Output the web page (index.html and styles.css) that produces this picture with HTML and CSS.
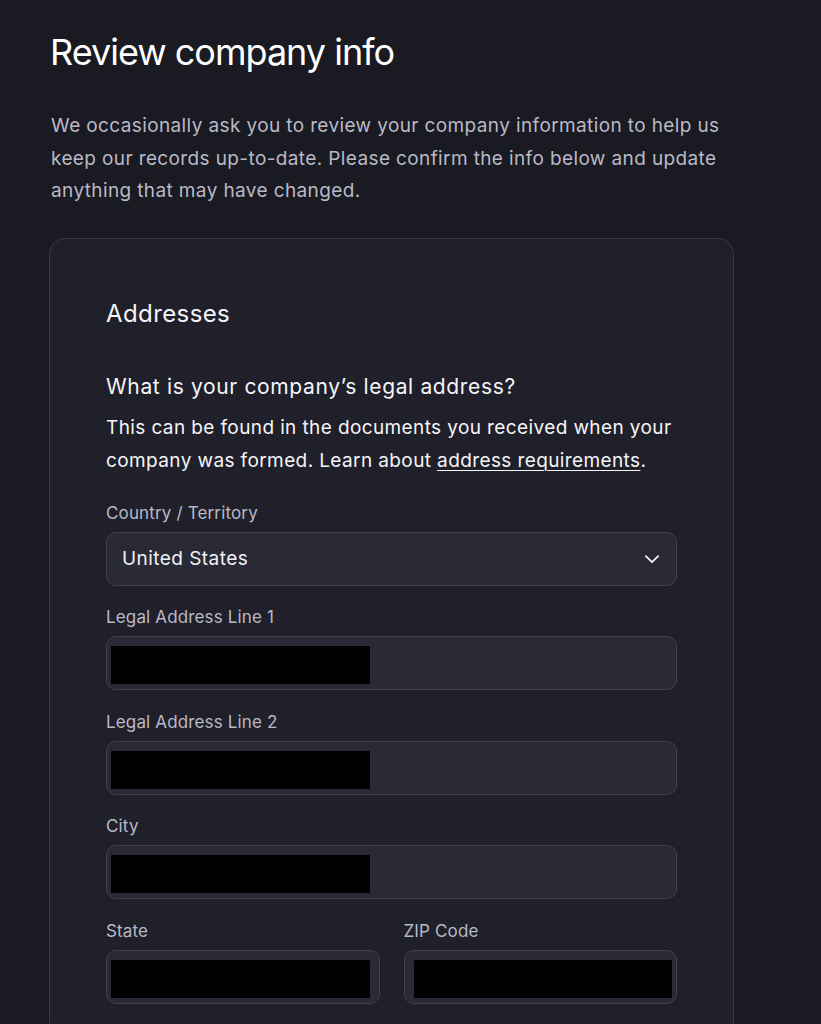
FILE: index.html
```html
<!DOCTYPE html>
<html lang="en">
<head>
<meta charset="utf-8">
<title>Review company info</title>
<link rel="stylesheet" href="styles.css">
</head>
<body>
<main class="page">
  <h1 class="title">Review company info</h1>
  <p class="intro">We occasionally ask you to review your company information to help us keep our records up-to-date. Please confirm the info below and update anything that may have changed.</p>
  <section class="card">
    <h2 class="card-title">Addresses</h2>
    <h3 class="question">What is your company’s legal address?</h3>
    <p class="help">This can be found in the documents you received when your company was formed. Learn about <a href="#" class="link">address requirements</a>.</p>
    <div class="fields">
      <div class="field">
        <label class="label">Country / Territory</label>
        <div class="input select">
          <span class="value">United States</span>
          <svg class="chev" width="16" height="16" viewBox="0 0 16 16" fill="none"><path d="M1.8 5.2 8 11.2l6.2-6" stroke="#f2f2f5" stroke-width="1.8" stroke-linecap="round" stroke-linejoin="round"/></svg>
        </div>
      </div>
      <div class="field">
        <label class="label">Legal Address Line 1</label>
        <div class="input"><span class="redact"></span></div>
      </div>
      <div class="field">
        <label class="label">Legal Address Line 2</label>
        <div class="input"><span class="redact"></span></div>
      </div>
      <div class="field">
        <label class="label">City</label>
        <div class="input"><span class="redact"></span></div>
      </div>
      <div class="row">
        <div class="field">
          <label class="label">State</label>
          <div class="input"><span class="redact state"></span></div>
        </div>
        <div class="field">
          <label class="label">ZIP Code</label>
          <div class="input"><span class="redact zip"></span></div>
        </div>
      </div>
    </div>
  </section>
</main>
</body>
</html>
```

FILE: styles.css
```css
html, body {
  margin: 0;
  padding: 0;
  background: #1a1a23;
}
body {
  font-family: Inter, "Noto Sans", sans-serif;
  color: #f3f3f6;
  -webkit-font-smoothing: antialiased;
}
.page {
  padding: 30px 0 0 50px;
  width: 684px;
}
.title {
  margin: 0;
  font-size: 36px;
  font-weight: 400;
  line-height: 44px;
  letter-spacing: -1px;
  color: #ffffff;
}
.intro {
  margin: 36px 0 0 1px;
  font-size: 19px;
  line-height: 32.5px;
  letter-spacing: 0.38px;
  color: #b9b9c6;
  width: 690px;
}
.card {
  margin-top: 30px;
  margin-left: -1px;
  background: #20202b;
  border: 1px solid #393946;
  border-radius: 16px;
  padding: 59px 56px 40px 56px;
  height: 800px;
  box-sizing: border-box;
}
.card-title {
  margin: 0;
  font-size: 24px;
  font-weight: 400;
  line-height: 32px;
  letter-spacing: 0.4px;
  color: #f5f5f8;
}
.question {
  margin: 42px 0 0;
  font-size: 21px;
  font-weight: 400;
  line-height: 30px;
  letter-spacing: 0.65px;
  color: #f5f5f8;
}
.help {
  margin: 9px 0 0;
  font-size: 19px;
  line-height: 33px;
  letter-spacing: 0.39px;
  color: #f5f5f8;
}
.link {
  color: #f5f5f8;
  text-decoration: underline;
  text-underline-offset: 3px;
  text-decoration-thickness: 1px;
}
.fields {
  margin-top: 24px;
  display: flex;
  flex-direction: column;
  gap: 19.5px;
}
.field {
  display: flex;
  flex-direction: column;
  gap: 7px;
  min-width: 0;
}
.label {
  font-size: 17px;
  line-height: 24px;
  letter-spacing: 0.15px;
  color: #b9b9c6;
}
.input {
  height: 54px;
  box-sizing: border-box;
  background: #2a2a36;
  border: 1px solid #40404e;
  border-radius: 10px;
  display: flex;
  align-items: flex-start;
  padding: 9px 4px 0;
}
.select {
  align-items: center;
  padding: 0 16px 0 15px;
  justify-content: space-between;
}
.value {
  font-size: 19px;
  letter-spacing: 0.45px;
  color: #f0f0f4;
}
.chev {
  display: block;
}
.redact {
  display: block;
  width: 259px;
  height: 38px;
  background: #000;
  border-radius: 1px;
}
.redact.state {
  width: 259px;
}
.redact.zip {
  margin-left: 5px;
  width: 260px;
}
.row {
  display: grid;
  grid-template-columns: 1fr 1fr;
  column-gap: 24px;
}
```
